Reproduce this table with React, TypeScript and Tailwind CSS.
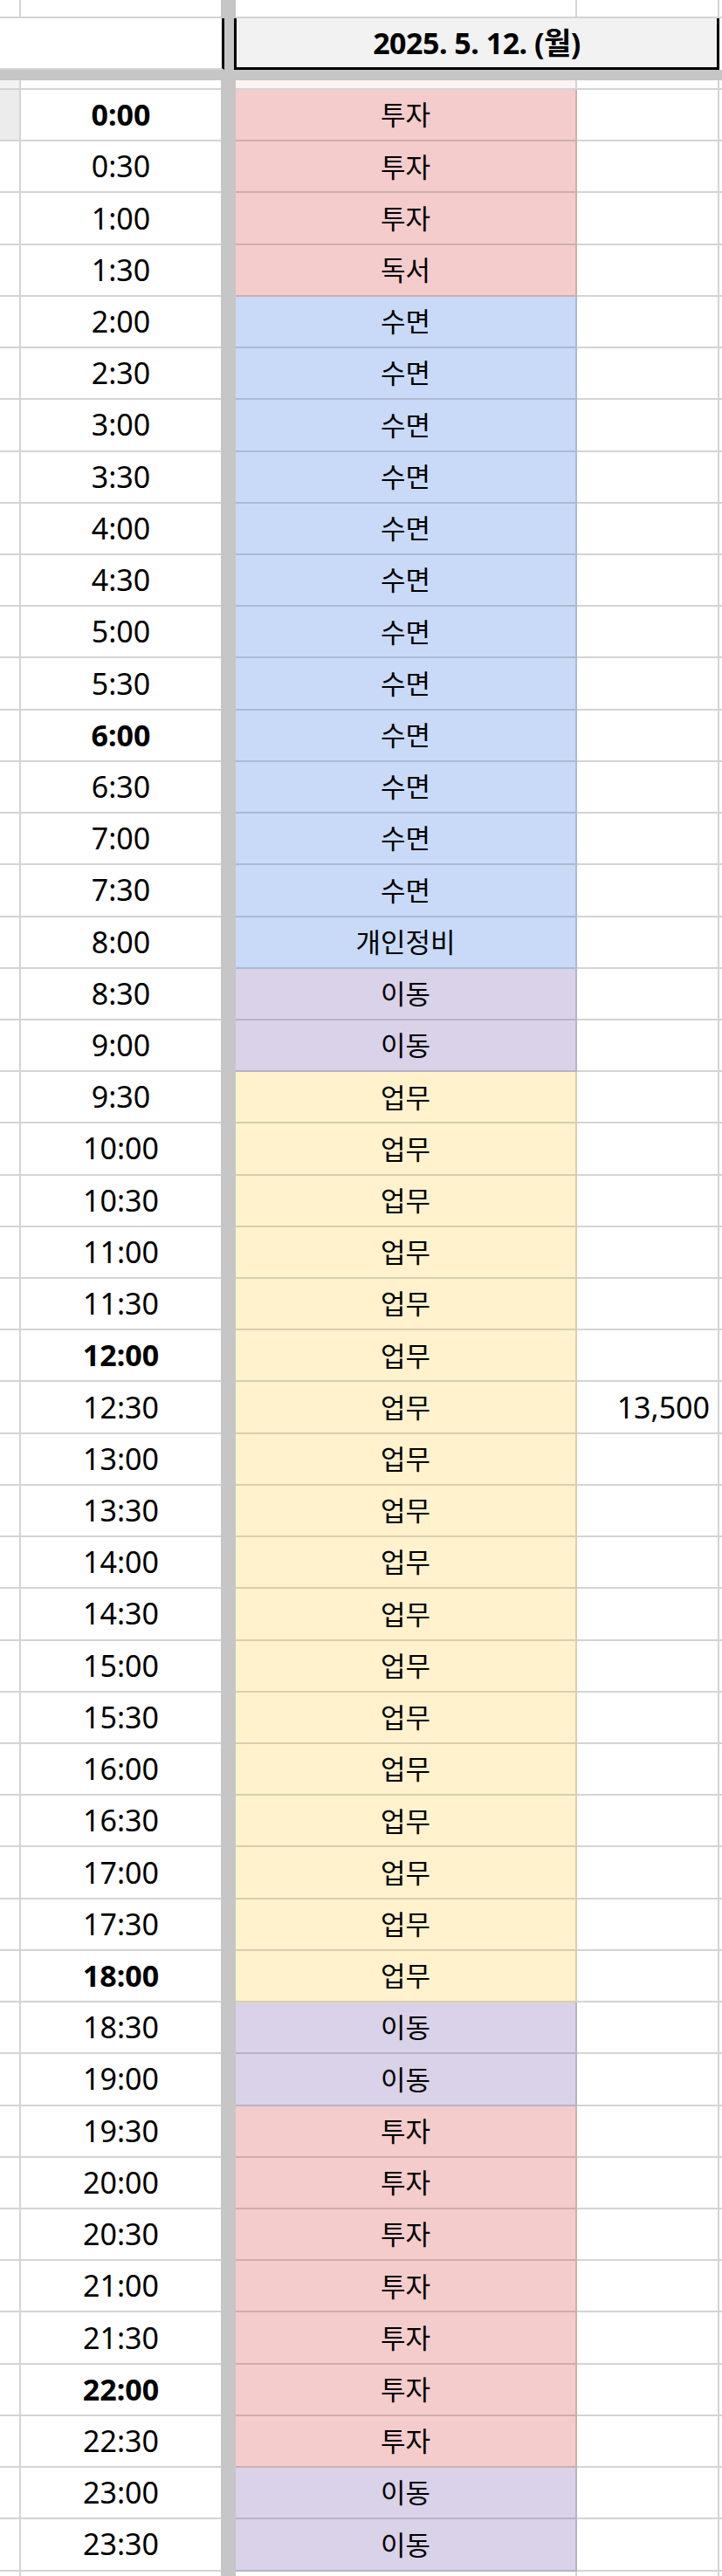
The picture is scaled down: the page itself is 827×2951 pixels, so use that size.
const font = { fontFamily: '"Noto Sans", "Noto Sans CJK KR", sans-serif' };

const fills = {
  pink: 'bg-[#f4cccc]',
  blue: 'bg-[#c9daf8]',
  purple: 'bg-[#d9d2e9]',
  yellow: 'bg-[#fff2cc]',
} as const;

type Fill = keyof typeof fills;

// [activity, fill, number of half-hour slots]
const blocks: [string, Fill, number][] = [
  ['투자', 'pink', 3],
  ['독서', 'pink', 1],
  ['수면', 'blue', 12],
  ['개인정비', 'blue', 1],
  ['이동', 'purple', 2],
  ['업무', 'yellow', 18],
  ['이동', 'purple', 2],
  ['투자', 'pink', 7],
  ['이동', 'purple', 2],
];

const slots = blocks.flatMap(([label, fill, n]) => Array.from({ length: n }, () => ({ label, fill })));

const boldTimes = ['0:00', '6:00', '12:00', '18:00', '22:00'];
const amounts: Record<string, string> = { '12:30': '13,500' };

const Separator = () => <div className="w-[17px] shrink-0 bg-[#c6c6c6]"></div>;

const App = () => {
  return (
    <div className="h-[2951px] w-full overflow-hidden bg-white text-black" style={font}>
      {/* top partial row */}
      <div className="flex h-[21px]">
        <div className="w-[24px] shrink-0 border-r-2 border-b-2 border-[#d4d4d4]"></div>
        <div className="w-[229px] shrink-0 border-b-2 border-[#d4d4d4]"></div>
        <Separator />
        <div className="w-[391px] shrink-0 border-r-2 border-b-2 border-[#d4d4d4]"></div>
        <div className="w-[163px] shrink-0 border-r-2 border-b-2 border-[#d4d4d4]"></div>
        <div className="flex-1 border-b-2 border-[#d4d4d4]"></div>
      </div>

      {/* header */}
      <div className="flex h-[59px]">
        <div className="w-[257px] shrink-0 border-r-[3px] border-b-2 border-r-black border-b-[#d4d4d4]"></div>
        <div className="w-[11px] shrink-0 bg-[#c6c6c6]"></div>
        <div className="flex w-[556px] shrink-0 items-center justify-center border-x-[3px] border-b-[3px] border-black bg-[#f2f2f2] text-[34px] font-bold tracking-[-0.5px]">
          2025. 5. 12. (월)
        </div>
        <div className="flex-1"></div>
      </div>

      {/* frozen pane line */}
      <div className="h-[12px] bg-[#c6c6c6]"></div>

      {/* partial row */}
      <div className="flex h-[11px]">
        <div className="w-[24px] shrink-0 border-r-2 border-b-2 border-[#d4d4d4] bg-[#f2f2f2]"></div>
        <div className="w-[229px] shrink-0 border-b-2 border-[#d4d4d4]"></div>
        <Separator />
        <div className="w-[391px] shrink-0 border-r-2 border-b-2 border-[#d4d4d4] bg-[#fdf3f3]"></div>
        <div className="w-[163px] shrink-0 border-r-2 border-b-2 border-[#d4d4d4]"></div>
        <div className="flex-1 border-b-2 border-[#d4d4d4]"></div>
      </div>

      {slots.map((slot, index) => {
        const time = `${Math.floor(index / 2)}:${index % 2 ? '30' : '00'}`;
        return (
          <div className="flex h-[59.22px]" key={index}>
            <div
              className={`w-[24px] shrink-0 border-r-2 border-b-2 border-[#d4d4d4] ${index === 0 ? 'bg-[#ececec]' : ''}`}
            ></div>
            <div
              className={`flex w-[229px] shrink-0 items-center justify-center border-b-2 border-[#d4d4d4] text-[34px] ${
                boldTimes.includes(time) ? 'font-bold' : ''
              }`}
            >
              {time}
            </div>
            <Separator />
            <div
              className={`flex w-[391px] shrink-0 items-center justify-center border-r-2 border-b-2 border-black/15 text-[31px] ${fills[slot.fill]}`}
            >
              {slot.label}
            </div>
            <div className="flex w-[163px] shrink-0 items-center justify-end border-r-2 border-b-2 border-[#d4d4d4] pr-[9px] text-[34px]">
              {amounts[time]}
            </div>
            <div className="flex-1 border-b-2 border-[#d4d4d4]"></div>
          </div>
        );
      })}

      {/* next row, cut off */}
      <div className="flex h-[20px]">
        <div className="w-[24px] shrink-0 border-r-2 border-[#d4d4d4]"></div>
        <div className="w-[229px] shrink-0"></div>
        <Separator />
        <div className="w-[391px] shrink-0 border-r-2 border-[#d4d4d4]"></div>
        <div className="w-[163px] shrink-0 border-r-2 border-[#d4d4d4]"></div>
        <div className="flex-1"></div>
      </div>
    </div>
  );
};

export default App;
